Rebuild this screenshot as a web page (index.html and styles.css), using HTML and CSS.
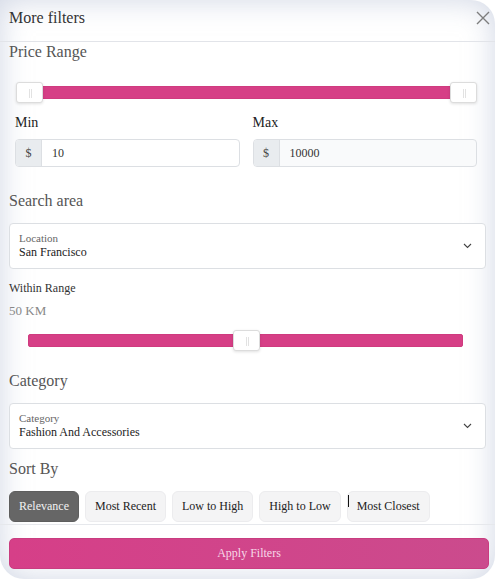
FILE: index.html
```html
<!DOCTYPE html>
<html>
<head>
<meta charset="utf-8">
<link rel="stylesheet" href="styles.css">
</head>
<body>
<div class="modal">
  <div class="modal-header">
    <span class="modal-title">More filters</span>
    <svg class="close" width="14" height="14" viewBox="0 0 14 14"><path d="M1 1 L13 13 M13 1 L1 13" stroke="#7d7d7d" stroke-width="1.4" fill="none"/></svg>
  </div>
  <div class="modal-body">
    <div class="section-title">Price Range</div>
    <div class="slider slider-price">
      <div class="track"></div>
      <div class="handle handle-start"></div>
      <div class="handle handle-end"></div>
    </div>
    <div class="minmax">
      <div class="field">
        <div class="field-label">Min</div>
        <div class="input-group">
          <span class="prefix">$</span>
          <span class="input-value">10</span>
        </div>
      </div>
      <div class="field">
        <div class="field-label">Max</div>
        <div class="input-group input-muted">
          <span class="prefix">$</span>
          <span class="input-value">10000</span>
        </div>
      </div>
    </div>
    <div class="section-title gap-search">Search area</div>
    <div class="select">
      <div class="select-text">
        <span class="select-label">Location</span>
        <span class="select-value">San Francisco</span>
      </div>
      <svg class="chevron" width="9" height="6" viewBox="0 0 9 6"><path d="M1 1 L4.5 4.5 L8 1" stroke="#444" stroke-width="1.1" fill="none"/></svg>
    </div>
    <div class="within">Within Range</div>
    <div class="km">50 KM</div>
    <div class="slider slider-range">
      <div class="track"></div>
      <div class="handle handle-mid"></div>
    </div>
    <div class="section-title gap-category">Category</div>
    <div class="select">
      <div class="select-text">
        <span class="select-label">Category</span>
        <span class="select-value">Fashion And Accessories</span>
      </div>
      <svg class="chevron" width="9" height="6" viewBox="0 0 9 6"><path d="M1 1 L4.5 4.5 L8 1" stroke="#444" stroke-width="1.1" fill="none"/></svg>
    </div>
    <div class="section-title gap-sort">Sort By</div>
    <div class="sort-buttons">
      <button class="chip chip-active">Relevance</button>
      <button class="chip">Most Recent</button>
      <button class="chip">Low to High</button>
      <button class="chip">High to Low</button>
      <button class="chip chip-cursor">Most Closest</button>
    </div>
  </div>
  <div class="modal-footer">
    <button class="apply">Apply Filters</button>
  </div>
</div>
</body>
</html>
```
FILE: styles.css
```css
* { box-sizing: border-box; }
html, body { margin: 0; padding: 0; background: #ffffff; }
body { font-family: "Liberation Serif", "Times New Roman", serif; color: #333; }

.modal {
  width: 495px;
  height: 579px;
  background: #fff;
  border-radius: 0 24px 24px 24px;
  box-shadow: inset 0 0 30px rgba(170, 180, 206, 0.55);
  display: flex;
  flex-direction: column;
  overflow: hidden;
}

.modal-header {
  height: 42px;
  flex: none;
  display: flex;
  align-items: center;
  justify-content: space-between;
  padding: 0 5px 6px 9px;
  border-bottom: 1px solid #e2e4e9;
}
.modal-title { font-size: 16px; color: #333; }
.close { display: block; }

.modal-body {
  flex: 1;
  padding: 0 9px;
  display: flex;
  flex-direction: column;
}

.section-title {
  font-size: 16px;
  line-height: 20px;
  color: #555;
}

.slider { position: relative; height: 21px; flex: none; }
.slider .track {
  position: absolute;
  left: 0; right: 0; top: 4px;
  height: 13px;
  background: #d63f86;
  border: 1px solid #cf3b7f;
  border-radius: 2px;
}
.handle {
  position: absolute;
  top: 0;
  width: 27px;
  height: 21px;
  background: #fff;
  border: 1px solid #dcdcdc;
  border-radius: 3px;
  box-shadow: 0 1px 3px rgba(0,0,0,0.12);
}
.handle::before, .handle::after {
  content: "";
  position: absolute;
  top: 6px;
  width: 1px;
  height: 9px;
  background: #e2e2e2;
}
.handle::before { left: 12px; }
.handle::after { left: 14px; }

.slider-price { margin: 20px 9px 0 7px; }
.slider-price .track { left: 24px; right: 24px; }
.handle-start { left: 0; }
.handle-end { right: 0; }

.slider-range { margin: 11px 23px 0 19px; }
.handle-mid { left: 50%; margin-left: -13px; }

.minmax {
  display: grid;
  grid-template-columns: 1fr 1fr;
  column-gap: 13px;
  margin: 11px 9px 0 6px;
}
.field-label { font-size: 14px; line-height: 18px; color: #222; }
.input-group {
  margin-top: 7px;
  height: 28px;
  display: flex;
  border: 1px solid #dcdfe3;
  border-radius: 4px;
  overflow: hidden;
  background: #fff;
}
.input-muted { background: #f9fafb; }
.prefix {
  width: 26px;
  flex: none;
  background: #e9ecef;
  border-right: 1px solid #dcdfe3;
  display: flex;
  align-items: center;
  justify-content: center;
  font-size: 12px;
  color: #444;
}
.input-value {
  display: flex;
  align-items: center;
  padding-left: 10px;
  font-size: 12px;
  color: #333;
}

.gap-search { margin-top: 24px; }
.gap-category { margin-top: 20px; }
.gap-sort { margin-top: 10px; }

.select {
  margin-top: 12px;
  height: 46px;
  flex: none;
  border: 1px solid #dcdfe3;
  border-radius: 4px;
  background: #fff;
  display: flex;
  align-items: center;
  justify-content: space-between;
  padding: 0 13px 0 9px;
}
.select-text { display: flex; flex-direction: column; margin-top: -2px; }
.select-label { font-size: 11px; line-height: 14px; color: #666; }
.select-value { font-size: 12px; line-height: 15px; color: #222; }
.chevron { display: block; margin-top: -1px; }

.within { margin-top: 11px; font-size: 12px; line-height: 16px; color: #333; }
.km { margin-top: 7px; font-size: 13px; line-height: 16px; color: #888; }

.sort-buttons {
  margin-top: 12px;
  display: flex;
  gap: 6px;
}
.chip {
  height: 31px;
  padding: 0 9px;
  font-family: "Liberation Serif", "Times New Roman", serif;
  font-size: 12px;
  color: #222;
  background: #f4f4f5;
  border: 1px solid #ececee;
  border-radius: 6px;
}
.chip-active { background: #666666; border-color: #5e5e5e; color: #f2f2f2; }
.chip-cursor { position: relative; }
.chip-cursor::before {
  content: "";
  position: absolute;
  left: 0;
  top: 3px;
  width: 1px;
  height: 12px;
  background: #111;
}

.modal-footer {
  flex: none;
  height: 55px;
  border-top: 1px solid #e6e8ec;
  padding: 13px 6px 0 9px;
}
.apply {
  width: 100%;
  height: 31px;
  border: 1px solid #c93d80;
  border-radius: 5px;
  background: linear-gradient(90deg, #d63f88, #cb4b8d);
  color: #f7d9e8;
  font-family: "Liberation Serif", "Times New Roman", serif;
  font-size: 12px;
}
```
